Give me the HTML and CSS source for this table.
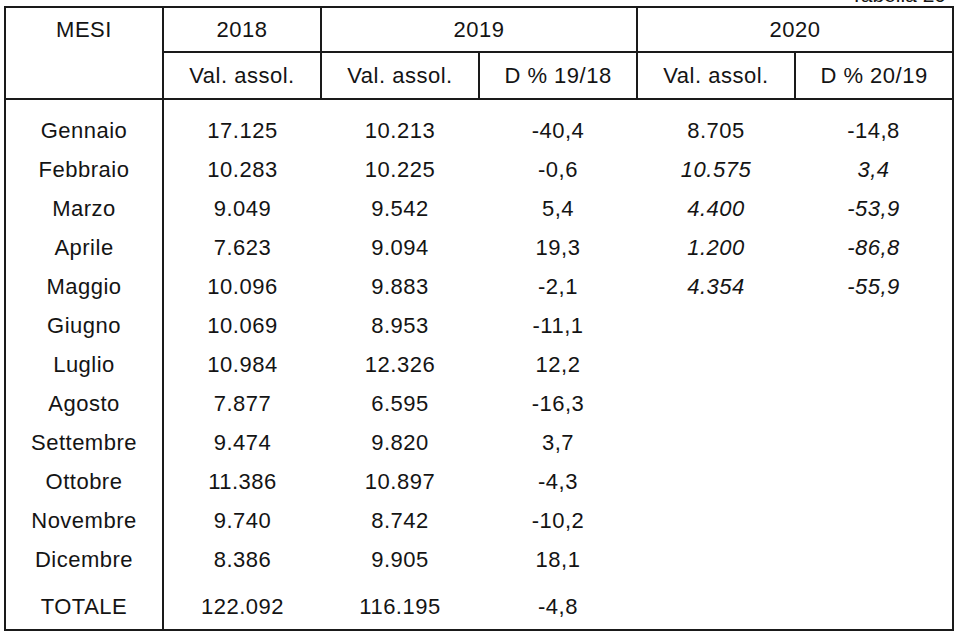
FILE: index.html
```html
<!DOCTYPE html>
<html lang="it">
<head>
<meta charset="utf-8">
<title>Tabella 20</title>
<link rel="stylesheet" href="styles.css">
</head>
<body>
<div class="caption">Tabella 20</div>
<table class="tab">
  <colgroup>
    <col class="col"><col class="col"><col class="col"><col class="col"><col class="col"><col class="col">
  </colgroup>
  <thead>
    <tr class="h1">
      <th rowspan="2" class="mesi">MESI</th>
      <th>2018</th>
      <th colspan="2">2019</th>
      <th colspan="2">2020</th>
    </tr>
    <tr class="h2">
      <th>Val. assol.</th>
      <th>Val. assol.</th>
      <th>D % 19/18</th>
      <th>Val. assol.</th>
      <th>D % 20/19</th>
    </tr>
  </thead>
  <tbody>
    <tr class="first"><td class="m">Gennaio</td><td>17.125</td><td>10.213</td><td>-40,4</td><td>8.705</td><td>-14,8</td></tr>
    <tr><td class="m">Febbraio</td><td>10.283</td><td>10.225</td><td>-0,6</td><td class="it">10.575</td><td class="it">3,4</td></tr>
    <tr><td class="m">Marzo</td><td>9.049</td><td>9.542</td><td>5,4</td><td class="it">4.400</td><td class="it">-53,9</td></tr>
    <tr><td class="m">Aprile</td><td>7.623</td><td>9.094</td><td>19,3</td><td class="it">1.200</td><td class="it">-86,8</td></tr>
    <tr><td class="m">Maggio</td><td>10.096</td><td>9.883</td><td>-2,1</td><td class="it">4.354</td><td class="it">-55,9</td></tr>
    <tr><td class="m">Giugno</td><td>10.069</td><td>8.953</td><td>-11,1</td><td></td><td></td></tr>
    <tr><td class="m">Luglio</td><td>10.984</td><td>12.326</td><td>12,2</td><td></td><td></td></tr>
    <tr><td class="m">Agosto</td><td>7.877</td><td>6.595</td><td>-16,3</td><td></td><td></td></tr>
    <tr><td class="m">Settembre</td><td>9.474</td><td>9.820</td><td>3,7</td><td></td><td></td></tr>
    <tr><td class="m">Ottobre</td><td>11.386</td><td>10.897</td><td>-4,3</td><td></td><td></td></tr>
    <tr><td class="m">Novembre</td><td>9.740</td><td>8.742</td><td>-10,2</td><td></td><td></td></tr>
    <tr><td class="m">Dicembre</td><td>8.386</td><td>9.905</td><td>18,1</td><td></td><td></td></tr>
    <tr class="total"><td class="m">TOTALE</td><td>122.092</td><td>116.195</td><td>-4,8</td><td></td><td></td></tr>
  </tbody>
</table>
</body>
</html>
```

FILE: styles.css
```css
html, body {
  margin: 0;
  padding: 0;
  background: #ffffff;
}

body {
  font-family: "Liberation Sans", Arial, sans-serif;
  color: #141414;
  width: 960px;
  height: 634px;
  overflow: hidden;
}

.caption {
  height: 21px;
  margin-top: -16px;
  font-size: 21px;
  line-height: 21px;
  text-align: right;
  padding-right: 14px;
}

.tab {
  margin: 1px 0 0 4px;
  border-collapse: collapse;
  table-layout: fixed;
  width: 950px;
  border: 2px solid #1a1a1a;
  font-size: 22px;
  letter-spacing: 0.5px;
}

.tab .col {
  width: 158px;
}

.tab th,
.tab td {
  padding: 0;
  text-align: center;
  font-weight: normal;
  white-space: nowrap;
}

.tab thead th {
  border: 2px solid #1a1a1a;
}

.h1 th {
  line-height: 43px;
}

.h2 th {
  line-height: 45px;
}

.tab th.mesi {
  vertical-align: top;
}

.tab td {
  line-height: 39px;
}

.tab td.m {
  border-right: 2px solid #1a1a1a;
}

.first td {
  padding-top: 11px;
}

.total td {
  padding-top: 8px;
  padding-bottom: 3px;
}

.it {
  font-style: italic;
}
```
